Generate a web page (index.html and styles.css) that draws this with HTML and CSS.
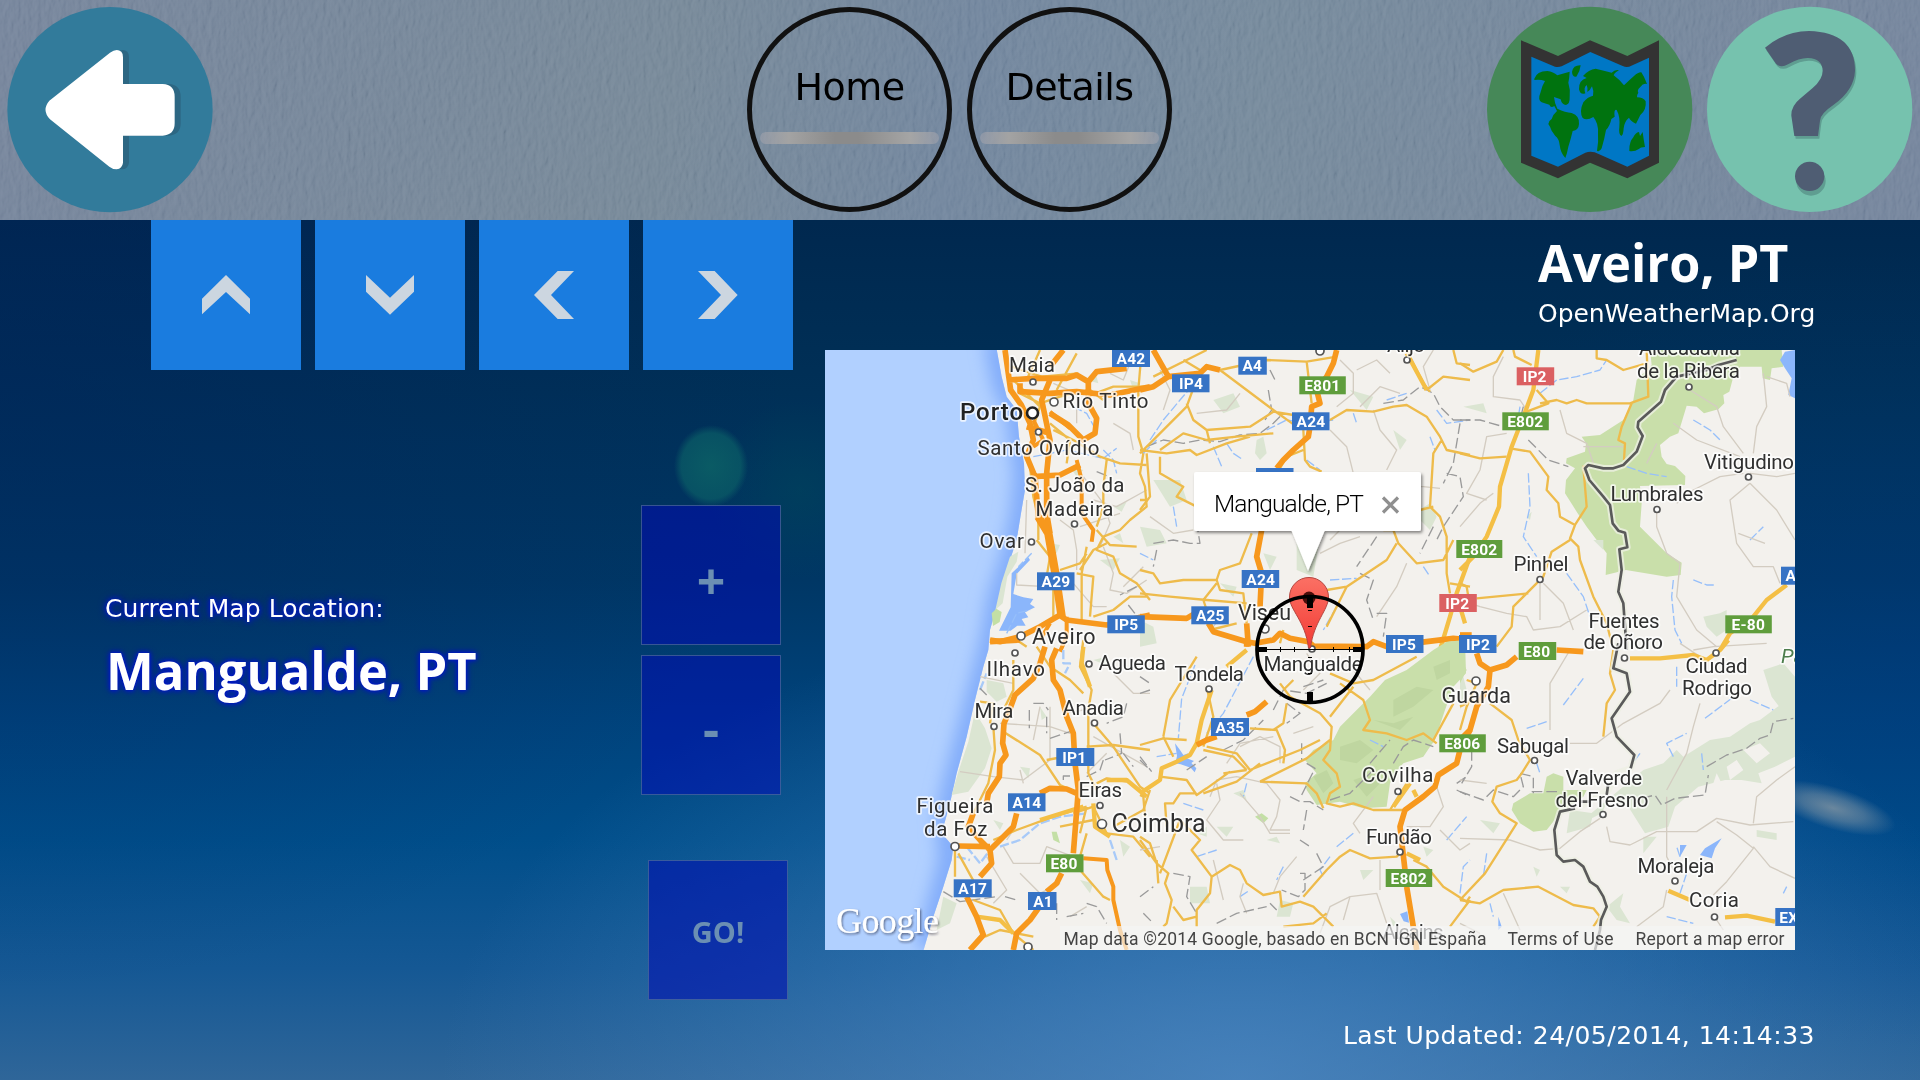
FILE: index.html
```html
<!DOCTYPE html>
<html lang="en">
<head>
<meta charset="utf-8">
<title>Weather map</title>
<link rel="stylesheet" href="styles.css">
</head>
<body>
<header class="topbar">
  <svg class="paper" width="1920" height="220" aria-hidden="true">
    <filter id="grain" x="0" y="0" width="100%" height="100%">
      <feTurbulence type="fractalNoise" baseFrequency=".2 .09" numOctaves="3" seed="4" result="n"/>
      <feDiffuseLighting in="n" surfaceScale="1.3" lighting-color="#fff"><feDistantLight azimuth="200" elevation="32"/></feDiffuseLighting>
    </filter>
    <rect width="1920" height="220" filter="url(#grain)"/>
  </svg>
  <nav class="side">
    <svg class="round" viewBox="0 0 660 660">
      <circle cx="330" cy="329" r="308" fill="#327b9b"/>
      <path transform="translate(18 0)" fill="#2d6783" d="M148 302L330 158Q350 143 364 155Q369 160 369 172V252H488Q524 254 524 290V370Q524 405 488 407H369V488Q367 505 350 508Q338 508 328 500L150 358Q124 330 148 302z"/>
      <path fill="#fff" d="M148 302L330 158Q350 143 364 155Q369 160 369 172V252H488Q524 254 524 290V370Q524 405 488 407H369V488Q367 505 350 508Q338 508 328 500L150 358Q124 330 148 302z"/>
    </svg>
  </nav>
  <nav class="tabs">
    <a class="tab"><span class="tab-name">Home</span><span class="tab-bar"></span></a>
    <a class="tab"><span class="tab-name">Details</span><span class="tab-bar"></span></a>
  </nav>
  <nav class="side side-right">
    <svg class="round" viewBox="60 0 660 660">
      <circle cx="389" cy="328" r="308" fill="#468858"/>
      <path fill="#333" d="M183 121L294 168L390 121L502 168L597 121V488L502 535L390 488L294 535L183 488z"/>
      <path fill="#0077c5" d="M214 170L285 200Q294 203 305 199L391 156L488 198Q502 204 514 197L567 173V467L502 500L404 457Q390 453 376 458L294 500L214 467z"/>
      <g fill="#00730f">
        <path d="M223 236Q230 214 262 213Q280 215 292 226L329 215Q328 235 325 248Q332 270 329 292Q330 312 318 315Q305 314 302 298L282 291Q284 312 292 326Q316 337 335 339Q360 348 357 372Q356 390 338 393Q333 415 325 440Q321 462 316 474Q302 460 299 435Q297 416 286 408L275 392Q272 382 265 372Q266 362 275 357Q280 342 291 333L283 318Q272 325 268 314L245 307Q232 300 242 276Q247 255 255 243Q240 237 223 240z"/>
        <path d="M336 215Q340 195 362 196Q360 215 349 230Q337 232 336 215z"/>
        <path d="M369 228Q386 208 407 206Q432 212 455 218Q465 208 477 211Q463 219 461 226Q480 240 492 256Q508 240 522 228Q535 216 544 217Q553 230 561 252Q550 248 541 261Q530 270 535 278Q530 285 531 292Q550 292 557 304Q560 330 541 345L528 371Q512 364 507 353Q493 364 491 385Q490 405 484 408Q475 402 478 382Q481 350 470 330Q461 326 464 350L454 357Q450 378 438 390Q433 418 425 445Q418 458 411 452Q416 425 414 400Q416 370 400 351Q380 363 368 354Q357 335 370 307Q382 291 399 287Q402 272 396 259Q390 272 382 276Q384 263 380 255Q370 262 376 280Q361 286 357 268Q356 240 380 234z"/>
        <path d="M508 449Q508 425 520 412Q526 398 537 396L540 408L548 396Q551 420 555 441Q541 441 538 446Q522 456 508 453z"/>
      </g>
    </svg>
    <svg class="round" viewBox="720 0 660 660">
      <circle cx="1049" cy="328" r="308" fill="#76c2ae"/>
      <g fill="#5f9d91" transform="translate(4 8)">
        <path d="M915 143Q975 93 1047 93Q1185 97 1185 212Q1183 270 1120 315Q1080 342 1080 362L1074 408H1003L994 347Q993 318 1020 296L1058 264Q1088 238 1088 212Q1087 176 1044 174Q1020 173 984 193Q962 205 948 191z"/>
        <circle cx="1049" cy="535" r="44"/>
      </g>
      <g fill="#4f5d73">
        <path d="M915 143Q975 93 1047 93Q1185 97 1185 212Q1183 270 1120 315Q1080 342 1080 362L1074 408H1003L994 347Q993 318 1020 296L1058 264Q1088 238 1088 212Q1087 176 1044 174Q1020 173 984 193Q962 205 948 191z"/>
        <circle cx="1049" cy="529" r="44"/>
      </g>
    </svg>
  </nav>
</header>

<main class="page">
  <section class="controls">
    <div class="pan">
      <button class="pan-btn"><svg viewBox="0 0 450 450"><path d="M153 283V236L225 165L297 236V283L225 216z"/></svg></button>
      <button class="pan-btn"><svg viewBox="0 0 450 450"><path d="M153 165V215L225 284L297 215V165L225 233z"/></svg></button>
      <button class="pan-btn"><svg viewBox="0 0 450 450"><path d="M285 153H236L165 225L236 297H285L216 225z"/></svg></button>
      <button class="pan-btn"><svg viewBox="0 0 450 450"><path d="M165 153H215L284 225L215 297H165L234 225z"/></svg></button>
    </div>
    <div class="lower">
      <div class="place">
        <p class="place-label">Current Map Location:</p>
        <h2 class="place-name"><span class="fit">Mangualde, PT</span></h2>
      </div>
      <div class="zoom">
        <button class="sq plus">+</button>
        <button class="sq minus">-</button>
        <button class="sq go">GO!</button>
      </div>
    </div>
  </section>

  <section class="view">
    <div class="heading">
      <h1 class="city"><span class="fit">Aveiro, PT</span></h1>
      <p class="source">OpenWeatherMap.Org</p>
    </div>
    <svg class="map" viewBox="0 0 970 600">
      <defs>
        <filter id="soft" x="-20%" y="-20%" width="140%" height="140%"><feGaussianBlur stdDeviation="24"/></filter>
        <filter id="drop" x="-20%" y="-20%" width="140%" height="160%"><feDropShadow dx="1.5" dy="2" stdDeviation="1.6" flood-opacity=".45"/></filter>
        <filter id="logodrop" x="-10%" y="-10%" width="120%" height="140%"><feDropShadow dx="1" dy="1.5" stdDeviation=".9" flood-color="#223" flood-opacity=".6"/></filter>
        <clipPath id="seaclip"><path d="M0 0H525L545 110L560 170L590 210L597 290L612 370L615 450L603 520L590 600L570 660L545 740L530 800L510 870L505 930L490 980L465 1080L440 1190L410 1300L390 1390L365 1480L400 1520L395 1560L370 1640L340 1730L308 1840H0z"/></clipPath>
        <linearGradient id="pin" x2="0" y2="1"><stop stop-color="#fb7064"/><stop offset="1" stop-color="#f23c35"/></linearGradient>
      </defs>
      <rect width="970" height="600" fill="#f3f1ed"/>

      <!-- west, north -->
      <g transform="translate(-5 -10) scale(.33333)">
        <g clip-path="url(#seaclip)">
          <rect width="700" height="1850" fill="#b1d0ff"/>
          <path fill="none" stroke="#83adfa" stroke-width="90" filter="url(#soft)" d="M535 0L560 130L600 210L610 290L625 400L615 520L590 640L545 780L525 900L500 1000L450 1190L410 1340L390 1440L400 1560L330 1830"/>
        </g>
        <g class="wood"><path d="M570 650l25-15-5 30-28 45-14 80-22 20 18-80z"/><path d="M750 380l40 10-20 20zM800 120l30-10 5 20zM880 500l40-15-15 30zM840 660l60-5-20 35zM930 120l30 10-20 20zM690 610l30 5-10 25zM880 590l20-10 10 30z"/></g>
        <path fill="#c3dfa5" d="M515 820l14-14 16 10-6 30-20 12z"/>
        <path class="lake" d="M575 700l50-48 5 8-40 42-10 60 30 10 30 5-10 15 15 10-30 15 10 15-20 5 12 20-25 0-20 15-35 0 15-30 20-40z"/>
        <path class="river" d="M635 640l-40 40M560 880l30-60 40-10M640 350l100-20 110 25 40-30M850 330l30 30 10 40M760 200l40 20 25 45"/>
        <path class="minor" d="M590 700l0 35 90 5M720 540l40 30 10 60 0 60M790 410l60 80 20 60-30 70M820 480l70 20 90-50M850 620l30 80-10 50 50 10 60-40M880 250l50 30 10 50M780 560l120-40M620 480l-5 160M760 730l60 70 40 0M870 100l40 20 20-50M910 740l60-60M700 130l70 30 0 90"/>
        <path class="rail" d="M925 795l50 65M830 395l30 12M950 740l-50 25"/>
        <path class="prim" d="M575 80l90 30 110-10M600 160l60 30 60-20 90-20 40 30M580 120l80 80-20 60M690 250l60 50-10 70M660 30l-40 90M770 40l-60 110M800 170l80-30 110 0M630 380l10 90 15 60 0 70M700 270l60 30 80 50 60 20 80 5M860 360l-10 80 0 60-20 60M965 30l-10 120 0 140 15 50-10 60 15 40 5 60-50 40-30 30-50 20-20 40 50 20 20 50 50 30 40 50M650 600l40 50-10 60M720 690l60-20 20-30M800 620l-15 80 0 140M700 740l0 90M770 700l50 10-10 120M820 830l60-20 50-40 50 0M860 610l-40 20-40 60M830 570l40 45 80 5"/>
        <path class="way" d="M555 30L572 150L604 195L630 250L640 300L620 350L645 410L655 530L685 580L706 700L725 830L740 840L860 855L990 825M565 120L640 115L740 115L770 105L805 125L830 95L920 85M600 130L600 155L690 160L770 155L870 165L990 140M690 120L665 180L690 300L680 400L680 520L690 580M690 220L745 255L790 300L825 280L830 235L805 190V120M620 260L690 280M640 410L720 405L780 375M730 30L690 80M510 900L540 905L600 890L660 860L720 825"/>
        <path class="way main-way" d="M655 530L685 580L706 700L725 830"/>
        <path class="thin-way" d="M690 215l60 50M640 240l30 60-30 20M740 830l0 60-20 45M690 850l-30 50M770 360L785 420L785 520L820 570L815 605"/>
      </g>

      <!-- centre, north -->
      <g transform="translate(315 -10) scale(.33333)">
        <g class="wood"><path d="M350 300l20-10 10 50-20 20-15-20zM220 180l60-20 20 40-50 20zM40 420l80 0 20 60-50 20zM470 590l70 0-20 120-50-20zM820 520l50-30 20 40-20 40zM0 560l60 10 20 40-60 10zM240 730l50 10-10 30zM0 840l40 20 10 50-50 10zM630 150l70 20-20 40zM760 270l40 30-20 30zM370 640l40 10-20 40z"/></g>
        <path class="river" d="M30 300l40-60 50-60 60-70M10 340l40-40M220 320l25 60M260 310l20 30 30 20M380 270l60-30 60 10 80-10M640 220l10 30M740 180l60-20M890 210l30 40 70-10M570 720l80-5M590 800l-40 70M100 500l10 60M850 680l20 30M500 360l40 30M0 640l40 20M870 290l15 40"/>
        <path class="minor" d="M60 90l30 60-20 60M170 220l90-10 40-50M600 60l40 40 0 60-50 40M650 90l60-30 40 40M700 210l20 60 50 60-30 60M570 270l50 50 20 80M570 600l60-60 60-40M880 30l-30 50 20 70M790 440l60 0 50 5M30 530l70 50 60-10M540 640l60-30 60-20M710 830l60-90 30-70M250 820l-30 40M660 200l60-60 60 20"/>
        <path class="rail" d="M20 320l50-20 60 10 50-10 60 5 60-20 60-5 40-30 30-30M390 90l15 30M385 150l10 60-20 30M730 190l60-10 50-40 40 20 20 40 40 40 50 0M960 250l-20 120-30 60M920 400l40 10 10 60-60 90-20 40M710 590l-60 90M880 560l-40 80M660 700l40 20-20 60 20 60M710 820l30 0-10 70M40 610l60-10 50 10 30 0-10-60M50 630l-10 50"/>
        <path class="prim" d="M240 90L380 60L500 65L590 50M500 65L515 190M180 90L140 200L30 310L0 340M140 190L160 240L200 270L330 260L400 215L460 225M240 90L320 150L400 210L470 260M200 270L210 310M60 330L130 280L200 300L290 290L400 280M0 330L80 340L150 330L170 345L260 310L330 290M20 340L30 470L0 510M570 240L620 210L700 215L760 200L800 195L860 230L900 290L920 330L990 345M905 300L880 340L870 500L900 530L920 590L920 700L930 760M490 270L495 360L510 380L545 395M490 330L440 350L400 420M730 570L760 570L775 610L830 670L910 660L940 600M770 610L740 660L620 740L560 750M620 740L560 860M0 690L40 700L60 730L130 720L230 720L240 690L300 670L335 580M230 720L240 750L310 760L320 850M0 760L90 770L200 780L320 790M230 730L190 780L220 870M60 350L60 400L130 440L110 470L170 500M840 510L880 500M930 730L990 740M800 30L850 130L870 155M860 150L910 110L990 120M940 30L950 70L990 75M0 480L15 480M130 60L180 90M40 110L140 60L200 30M210 870L290 850M430 870L420 910"/>
        <path class="wide" d="M990 650L950 760L930 830L900 930M860 150L800 40"/>
        <path class="way" d="M40 30L85 110L40 140L0 150M85 110L180 100L200 80L240 90M590 30L580 70L560 110L530 150L540 190L515 200L510 260L505 290L460 330L430 360L410 385M365 570L350 650L365 700L360 800M0 830L140 835L165 820M205 850L220 875L320 905L345 910L400 900L420 880L450 895L505 905L520 918L680 920L700 905L740 920L860 905L940 895L990 900M320 850L325 920"/>
      </g>

      <!-- east, north -->
      <g transform="translate(635 -10) scale(.33333)">
        <path class="park" d="M570 30L965 30L970 80L935 85L930 120L908 115L905 80L840 80L820 110L808 155L790 165L793 190L775 208L732 220L710 200L680 197L655 280L630 290L600 315L605 350L620 372L645 378L676 408L675 435L540 438L545 490L540 560L580 600L620 640L665 668L662 705L620 710L498 690L437 705L440 640L410 600L380 560L350 515L315 460L318 420L345 385L318 370L320 355L375 335L378 310L365 290L420 285L490 240L520 180L530 120L575 75z"/>
        <path class="lake" d="M960 60l15-25 30-5v145l-20-10 10-50-20-30z"/>
        <g class="wood"><path d="M730 830l50-10 20-10 0 60-30 20-30-30zM400 600l30 0 0 30zM200 530l15-15-5 25zM10 200l60-10 10 30z"/></g>
        <path class="river" d="M240 160l50-40 60-10 70-20 20-30M500 380l60 20 60 10M205 400l5 100-20 90 40 60M320 700l50 70 20 60M640 720l-5 50 10 100 20 40M700 720l40 15 25 0M180 200l-10 60M700 240l50 30 30 30M870 600l40-40"/>
        <path class="minor" d="M130 50l-30 60 0 60 80 10 20 30M300 210l20 70 60 30 20 60M370 320l120 0M590 310l-30 60M640 250l70 50 130 50M690 150l80 50 20 60 60 80M850 400l-70 10-80 40-50 40M870 400l80 10 55-10M880 340l10-80 30-60-10-100M920 110l60 20 10 40M870 430l-60 50 20 130 50 70 60 0 20 50M870 430l80 80 55 90M590 500l0 60 30 80 40 30-10 100 60 100 60 50M835 580l80 30M80 480l-60-20 40-70 20-100 60-10M100 460l-40 30-60 70M240 720l0 120M250 730l60 60 30 80M0 780l60 20 80 20 60 10 20 40 80-10 80-50"/>
        <path class="rail" d="M0 240l60 0 70 20M205 300l60 60 60 20M190 200l-10 40"/>
        <path class="prim" d="M0 70L40 95L110 65L130 30M160 30L165 50L215 75M410 30L410 55L440 60L490 90L560 70M230 150L265 190L200 215M240 190L290 180L320 190L350 180L380 190L510 190L565 170L560 30M515 190L485 260L475 300L495 310L492 360M0 340L60 355L140 350M150 325L210 335L265 410L260 450L295 490L300 530L345 555L380 500L370 380L400 375M345 555L330 595L355 620L360 660L400 770L440 850L455 910M330 600L275 635L250 710L160 800L155 860L110 920M50 775L205 760M0 730L20 740L25 770"/>
        <path class="wide" d="M235 30L220 150L190 230L155 320L120 440L117 500L80 590L40 650L0 690M980 735L920 780L880 830L810 880L780 930M0 800L15 850"/>
        <path class="way" d="M0 885L35 885"/>
        <path class="border-glow" d="M830 60L775 75L740 90L650 110L615 150L603 185L535 245L533 262L548 288L530 335L490 375L460 385L430 385L385 375L375 385L388 420L430 470L450 495L458 550L475 572L495 578L502 622L478 628L485 690L475 755L490 790L500 930"/>
        <path class="border" d="M830 60L775 75L740 90L650 110L615 150L603 185L535 245L533 262L548 288L530 335L490 375L460 385L430 385L385 375L375 385L388 420L430 470L450 495L458 550L475 572L495 578L502 622L478 628L485 690L475 755L490 790L500 930"/>
      </g>

      <!-- west, south -->
      <g transform="translate(-5 290) scale(.33333)">
        <g class="wood"><path d="M500 120l50 10 10 40-30 15-30-30zM465 215l30 50 20 60-20 60-50 70-50 10 20-70 30-90zM600 380l30 5-5 30zM370 770l40 20-20 60-40 20zM660 200l20 30-15 10zM820 60l40-10 10 30zM840 200l20-15 10 30zM520 540l30 10-10 20zM780 720l40 10-10 30zM900 600l30 20-20 30z"/></g>
        <path fill="#c3dfa5" d="M695 575l15 0 10 35-20-10z"/>
        <path class="river wide-river" d="M540 620l60-20 60-50 60-20 80-10M730 30l0 40 20 0-15 30M410 650l40 10M440 620l40 50 30-40M870 600l20 60M480 150l20-50"/>
        <path class="minor" d="M480 110l100 20M540 250l150 10 60 20M420 395l100 15 90 10 80-60 0-160M660 200l-20 100M610 430l-10-40M550 620l30 50 80 0 20-50 80 30M600 700l60 60 60-30M500 650l60 100-40 40M730 220l60-10M860 340l-60 60M820 290l160 90M880 100l60 60 50 0M560 600l20-30M800 800l-50 30M540 840l60 60"/>
        <path class="rail" d="M480 145l20 20M628 210v55M640 190l30 0 15 20M680 230v50M690 295l60-20M730 420v-12h35M800 410l40-20 10-30M900 280l5 60-50 20M920 190l-10 40-50 20M370 755l50 30 110-15M555 770l35 10M910 340l30 40M960 360l30 30M800 790l30 10 30 50M710 790v50M740 830l50-10"/>
        <path class="prim" d="M580 60L580 150L555 200M520 260L525 330L505 430L470 500L440 560M550 275L660 345L720 435L765 455M680 360L760 345M800 320L880 315L990 330M820 250L880 320L960 440L990 460M790 0L780 80L815 150L805 210L805 400L830 450M650 20L690 80L750 120L790 160M480 185L520 190L510 250M405 620L405 710M415 640L470 740M460 780L540 810L580 880L640 930M495 890L540 870L640 890M520 600L590 570L700 530L800 500M780 580L800 500M800 580L780 650M780 690L850 770L870 780M760 520L820 500L860 580L940 590L990 650M990 450L970 510L880 560M720 560L820 540M830 430L860 415L920 425M620 20L590 0"/>
        <path class="wide" d="M790 20L785 70L810 140M860 420L920 420L980 470M820 490L825 560L870 590M470 830L540 840L580 880M660 540L790 500"/>
        <path class="way" d="M510 5L600 0M675 20L660 70L640 115L585 165L565 220L552 250L548 310L558 345L540 370L538 410L505 460L500 490M460 520L445 560L480 600L510 630L515 670L480 710M415 618L510 620M480 600L510 630L580 560L590 520M660 460L690 445L740 447L770 460M710 25L695 60L700 120L720 150L740 230L760 280L765 370L775 450L760 640M725 700L710 730L680 755M655 805L630 840L590 880L580 930M440 770L470 830L490 885L450 930"/>
        <path class="thin-way" d="M790 655L860 660L862 690L880 740L880 780L900 870L920 930"/>
      </g>

      <!-- centre, south -->
      <g transform="translate(315 290) scale(.33333)">
        <path class="park" d="M735 120L800 90L880 30L920 5L975 0L978 100L940 140L915 210L885 300L870 320L850 350L790 370L765 400L750 430L740 500L670 505L600 485L530 495L500 450L495 430L530 400L495 360L520 330L580 300L600 260L650 210L690 170z"/>
        <g fill="#bfd6a0"><path d="M760 180l70-40 50 10-60 50-60 30zM600 320l60-20 40 30-50 40-50-10zM520 410l40-20 20 40-30 30zM640 420l60-20 30 20-50 50zM880 80l50-20 0 40-40 20zM700 240l60 10 60-20-40 40z"/></g>
        <g class="wood"><path d="M750 830l20 20-10 10zM150 740l50 0 10 50-60 0zM280 460l30-10 10 30zM170 580l30-20 0 30zM420 780l40 10-10 40-40 0zM380 600l30-10 10 20zM230 560l50 0-20 30zM660 690l40 0-30 30zM850 620l30 10-20 20z"/></g>
        <path fill="#c3dfa5" d="M345 530l20-10 20 15-15 15z"/>
        <path class="lake" d="M105 310l15 20 10 15 15-5-5 15 22 8-8 6 15 16-5 12-12-14-30-10-16-3 5-22zM780 822l22-8 5 34-16-4z"/>
        <path class="river" d="M165 75l-40 100-10 120M50 350l60-10M340 50l-90 170-50 60M130 490l60 20M320 430l-10 40M570 650l-30 40 10 20M430 680l-20 40M590 620l50-40M960 760l10-80 20-20M170 650l60-20M690 300l40 20M300 770l30-20M920 600l60-70"/>
        <path class="minor" d="M210 470l20-50 60-10 90 20 40 50-10 50-20 40 60 0M230 430l10 50-40 60 50 60 60 0M300 460l60 70 30 50 60 0M0 630l60-10M300 320l60-30 60 30 0 50M260 370l40-60 100-20M720 750l0-90M610 840l20-70 80-10 30 90M700 470l-60 80 20 30M800 560l70 0 40-60-20-60M640 90l50 60M500 40l40 60-50 50M460 280l60-20M540 880l30-80 60-30M900 570l60 60 30-20M400 760l20-50 50-60M320 820l-20-50 10-40M220 660l30 120"/>
        <path class="rail" d="M0 350l35 45M140 390l60-40M250 330l60-30 60-60M400 210l30-60 70 10 60-30M440 190l40 30-40 30M490 140l60-20M485 310l0 50M500 370l25 15-20 40-20 40M450 470l30 15 30 0 40 25M500 510l-10 60M480 600l30 20M530 640l20 40-60 40M480 700l15 0 0 50-20 20-50-20M570 480l60-20 80-80M760 370l30-50 30-20 60 20M690 370l60-70M100 700l50 10-10 60 30 50M230 850l60-30 90-20M390 790l20 20M0 770l40-30M950 430l30-20M950 450l40 20M10 820l30 30M0 160l30-10M0 110l30 20"/>
        <path class="prim" d="M170 50L90 180L70 290M0 315L70 295L140 300M200 140L220 230L190 320M70 290L100 350M60 410L140 420L170 465L200 445L270 395M190 460L290 425L360 370M200 320L290 340L330 390L480 330L540 300M320 390L250 400M190 330L280 350L320 390M360 425L500 355L570 300M360 425L500 430L530 460L550 505M330 265L410 270L435 330L430 370M440 190L430 250L400 270M420 130L450 170L540 220L575 260L570 330L550 360L590 400L600 440L570 460L560 490L600 500L640 490L700 510L790 510M570 100L640 130L700 120L830 50M640 140L570 230M600 130L670 180L690 240L670 270L740 280L800 300L850 280L890 310M880 300L940 190M0 590L30 610L50 670L85 700L75 730L95 780L80 850L70 860M50 660L55 730M60 700L120 540L180 600L155 630L215 710L210 760L170 810L170 860M0 600L50 670M215 710L270 675L300 690L320 730L370 765L420 755L425 800L480 785L520 800L550 830L580 860M490 770L560 690L600 650L630 630L690 655L770 650L780 640M820 660L860 680L910 740L980 785L990 770M990 780L930 860M170 460L120 460L100 490L75 490L80 560M800 430L750 510M0 465L10 470L15 530M560 820L520 850L430 860M100 800L130 840L170 830M430 150L460 120"/>
        <path class="wide" d="M0 460L60 420L65 385L110 365L150 345L170 310L185 240L215 150M260 80L320 30M760 500L810 430M820 450L830 470M840 660L800 640"/>
        <path class="way" d="M380 185L345 215L320 225M230 290L200 300L170 315M320 0L320 20M990 270L960 330L950 370L895 405L885 440L850 470L795 510L780 560L795 690M800 740L820 860L830 930"/>
      </g>

      <!-- east, south -->
      <g transform="translate(635 290) scale(.33333)">
        <g class="wood"><path d="M550 390l60-20 40-40 20 20 80-50 60-10 60-40 30-10 80-60 25 20v150l-60 30-50 20 10 30-60-10-50 0-80 20-70 60-20 60-70 20-50-80-60-20-20 40-80 40zM910 90l60-20 35 40v100l-40 0-30-40zM330 510l70 10-10 40-70 20zM890 570l60 10 0 20-60-10zM300 740l30 0-10 20zM440 800l50-40-10 40 30 50-40-10zM0 70l20 80-20 60zM550 590l40 0-40 50zM60 540l60 10-20 30zM220 680l20 10-10 20z"/></g>
        <path class="park" d="M160 490L210 460L250 460L260 410L280 400L310 410L310 450L380 450L370 470L300 520L260 570L220 575L180 550L155 510zM0 50L20 90L0 130z"/>
        <path fill="#f3f1ed" d="M800 380l30-20 20 30-40 30zM850 330l50-20 30 30-40 30zM770 400l20 40-30-10z"/>
        <path class="lake" d="M735 625l50-30-20 30-10 30-35-10zM660 615l20 0-20 35zM115 830l10 30-10 10z"/>
        <path class="river" d="M735 235l80-60M310 195l60-80M200 265l60-20M640 350l-20-40 60-30M725 340l5 50M650 80l0 60M870 180l70 30M80 640l-10 70M90 790l10 40M970 760l10-20M680 700l-20 60M660 650l-10-30M540 340l-30 40M620 830l80 20M230 370l10 30"/>
        <path class="minor" d="M270 270l0-140 60-100M330 310l80 0 80-60 110-60 30-40M720 190l-20 70-20 80-60 110M620 470l0 180 20 40M0 595l150 5 90 30 60-5 60-50 60-40M440 560l10 45 60 10 80-40 120 0 60-40 100 20 130-10M770 545l60 40 50 40-80 100-40 40M880 620l50 60 75 35M880 550l10-80 60-50 55-40M620 750l-10 50-80 60M770 840l20 30M130 760l50 110M660 10l60 40M700 30l60-10 160-10M0 850l60 30M0 420l80 10"/>
        <path class="rail" d="M0 455l70 25 30-30 60 20 30-30-10-40 40 10 0 50M215 455l80 0M545 475l40-10 20 30 40-20 90-10 10-60M740 380l60-35 60-20 40-30 30-10 10-40 60-10M35 330l0 50-30 50"/>
        <path class="prim" d="M90 190L155 240L175 300L210 360L185 400L170 420L110 440L97 485L120 520L170 550L145 590L75 700L0 780M0 780L60 790L130 750L235 740L340 795L400 805L420 830L400 860M460 30L450 100L465 150L440 190L430 290M20 120L50 130L20 200L0 270M0 200L40 180"/>
        <path class="wide" d="M510 55L600 55L700 45L740 60L780 30L805 0M625 752L690 780M795 832L860 827L945 845"/>
        <path class="way" d="M50 40L60 70L90 90L140 75L170 50M90 90L85 140L50 200L30 270L0 300M290 30L370 35"/>
        <path class="border-glow" d="M475 10L460 85L500 100L510 155L455 235L470 290L523 345L512 385L470 400L445 450L360 500L300 515L283 570L290 645L310 665L345 660L370 680L390 725L412 740L430 770L440 800L423 840L420 870L405 930"/>
        <path class="border" d="M475 10L460 85L500 100L510 155L455 235L470 290L523 345L512 385M445 430L440 465M390 485H360M345 505L300 515L283 570L290 645L310 665L345 660L370 680L390 725L412 740L430 770L440 800L423 840L420 870L405 930"/>
      </g>

      <g class="dot">
        <circle cx="208" cy="32" r="3"/><circle cx="229" cy="52" r="4"/><circle cx="213.500" cy="82" r="3"/><circle cx="249.500" cy="174" r="3"/><circle cx="206.500" cy="192" r="3"/><circle cx="196" cy="286" r="4"/>
        <circle cx="495" cy="1" r="4"/><circle cx="582" cy="10" r="3"/><circle cx="440" cy="279" r="4"/><circle cx="487" cy="299" r="3"/>
        <circle cx="864" cy="37" r="3"/><circle cx="923.500" cy="127" r="3"/><circle cx="832" cy="159.500" r="3"/><circle cx="715" cy="229.500" r="3"/>
        <circle cx="190" cy="303" r="3"/><circle cx="264" cy="314" r="3"/><circle cx="169" cy="376.500" r="3"/><circle cx="269.500" cy="373" r="3"/><circle cx="275" cy="455.500" r="3"/><circle cx="277" cy="474" r="4.500"/><circle cx="130" cy="496.500" r="4"/><circle cx="203" cy="597" r="4"/>
        <circle cx="384" cy="339" r="3"/><circle cx="573" cy="441.500" r="3"/><circle cx="575" cy="502" r="3"/>
        <circle cx="799.500" cy="308" r="3"/><circle cx="891" cy="303" r="3"/><circle cx="651" cy="331" r="4"/><circle cx="709.500" cy="410.500" r="3"/><circle cx="778" cy="464.500" r="3"/><circle cx="850" cy="531" r="3"/><circle cx="889.500" cy="567" r="3"/>
        <circle class="capital" cx="207.500" cy="63" r="5.500"/>
      </g>

      <g class="town" transform="translate(0 -.7)">
        <text x="184" y="23" textLength="46">Maia</text>
        <text x="135" y="70.500" textLength="63" class="big bold">Porto</text>
        <text x="237.500" y="58.700" textLength="86">Rio Tinto</text>
        <text x="152.500" y="105.500" textLength="122">Santo Ovídio</text>
        <text x="200" y="143" textLength="99.500">S. João da</text>
        <text x="210.500" y="166.500" textLength="78">Madeira</text>
        <text x="154.500" y="198.500" textLength="44.500">Ovar</text>
        <text x="207" y="294.500" textLength="63.500" class="mid">Aveiro</text>
        <text x="562" y="2.500" textLength="38">Alijo</text>
        <text x="413" y="270.500" textLength="53" class="mid">Viseu</text>
        <text x="814" y="6" textLength="101">Aldeadávila</text>
        <text x="812" y="29" textLength="103">de la Ribera</text>
        <text x="879" y="119.300" textLength="90">Vitigudino</text>
        <text x="785.500" y="151.300" textLength="93">Lumbrales</text>
        <text x="688.500" y="221.500" textLength="55">Pinhel</text>
        <text x="763.500" y="279" textLength="71">Fuentes</text>
        <text x="758.500" y="300" textLength="79.500">de Oñoro</text>
        <text x="161.500" y="326.500" textLength="58.500">Ilhavo</text>
        <text x="273.500" y="321" textLength="67.500">Agueda</text>
        <text x="149.500" y="369" textLength="39">Mira</text>
        <text x="237.500" y="365.500" textLength="61.500">Anadia</text>
        <text x="253.500" y="448" textLength="43.500">Eiras</text>
        <text x="91.500" y="463.300" textLength="77">Figueira</text>
        <text x="99" y="486.500" textLength="63.500">da Foz</text>
        <text x="286.500" y="483" textLength="94" class="big">Coimbra</text>
        <text x="349.500" y="332" textLength="69.500">Tondela</text>
        <text x="438.500" y="321.500" textLength="99">Mangualde</text>
        <text x="616.500" y="354" textLength="69.500" class="mid">Guarda</text>
        <text x="537" y="433" textLength="71.500">Covilha</text>
        <text x="541" y="494.700" textLength="66">Fundão</text>
        <text x="557.500" y="590" textLength="61">Alcains</text>
        <text x="860.500" y="324" textLength="62">Ciudad</text>
        <text x="857" y="345.700" textLength="70">Rodrigo</text>
        <text x="672" y="403.300" textLength="72">Sabugal</text>
        <text x="740.500" y="435.500" textLength="76.500">Valverde</text>
        <text x="730.500" y="457.300" textLength="93">del Fresno</text>
        <text x="812.500" y="524" textLength="77">Moraleja</text>
        <text x="864" y="558" textLength="50">Coria</text>
        <text x="956" y="314" class="green">Parque</text>
      </g>

      <g class="shield">
        <g transform="translate(287 -1)"><rect width="38"/><text x="19">A42</text></g>
        <g transform="translate(212 222.300)"><rect width="37.500"/><text x="19">A29</text></g>
        <g transform="translate(282.300 265.300)"><rect width="37.500"/><text x="19">IP5</text></g>
        <g transform="translate(413.300 6.700)"><rect width="28.500"/><text x="14">A4</text></g>
        <g transform="translate(347 24.300)"><rect width="37.500"/><text x="19">IP4</text></g>
        <g transform="translate(467 62.300)"><rect width="37.500"/><text x="19">A24</text></g>
        <g transform="translate(431 118)"><rect width="37.500"/><text x="19">IP3</text></g>
        <g transform="translate(416.700 220)"><rect width="37.500"/><text x="19">A24</text></g>
        <g transform="translate(366.300 256.300)"><rect width="37.500"/><text x="19">A25</text></g>
        <g transform="translate(561 285)"><rect width="37.500"/><text x="18">IP5</text></g>
        <g transform="translate(634 285)"><rect width="37.500"/><text x="19">IP2</text></g>
        <g transform="translate(956 216.700)"><rect width="37.500"/><text x="19">A62</text></g>
        <g transform="translate(231.300 398)"><rect width="38"/><text x="18">IP1</text></g>
        <g transform="translate(183 443.300)"><rect width="37.500"/><text x="19">A14</text></g>
        <g transform="translate(128.700 529.300)"><rect width="38"/><text x="19">A17</text></g>
        <g transform="translate(203 542)"><rect width="28.500"/><text x="15">A1</text></g>
        <g transform="translate(386 368)"><rect width="38"/><text x="19">A35</text></g>
        <g transform="translate(950.300 558)"><rect width="46"/><text x="26">EX-A1</text></g>
        <g class="euro">
          <g transform="translate(474.300 26.300)"><rect width="46.500"/><text x="23">E801</text></g>
          <g transform="translate(677.300 62.300)"><rect width="46.500"/><text x="23">E802</text></g>
          <g transform="translate(631.300 190)"><rect width="46"/><text x="23">E802</text></g>
          <g transform="translate(693.700 292)"><rect width="37.500"/><text x="18">E80</text></g>
          <g transform="translate(900.300 265.300)"><rect width="46.500"/><text x="23">E-80</text></g>
          <g transform="translate(221 504.300)"><rect width="37.500"/><text x="18">E80</text></g>
          <g transform="translate(614.300 384.300)"><rect width="46.500"/><text x="23">E806</text></g>
          <g transform="translate(560.700 519)"><rect width="46.500"/><text x="23">E802</text></g>
        </g>
        <g class="red">
          <g transform="translate(691.700 17.300)"><rect width="37.500"/><text x="18">IP2</text></g>
          <g transform="translate(614.300 244)"><rect width="37.500"/><text x="18">IP2</text></g>
        </g>
      </g>

      <path fill="url(#pin)" stroke="#b5453f" d="M464.500 247a19.500 19.500 0 0 1 39 0c0 13-15 25-18 51h-2c-3-27-19-38-19-51z"/>
      <circle cx="484" cy="248" r="6.500" fill="#4a0d0a"/>

      <g fill="none" stroke="#000">
        <circle cx="485" cy="299.500" r="53" stroke-width="3.700"/>
        <path stroke-width="6" d="M485 247v11M485 342v11"/>
        <path stroke-width="5" d="M433 299.500h9M528 299.500h9"/>
        <path d="M440 299.500h90M455.500 297v5M469.500 297v5M508.500 297v5M524.500 297v5M483 260.500h4M483 276.500h4M483 307.500h4M483 323.500h4"/>
      </g>

      <path filter="url(#drop)" fill="#fff" d="M371 122h223q2 0 2 2v55q0 2-2 2h-94.500L483 221L466.700 181H371q-2 0-2-2v-55q0-2 2-2z"/>
      <text class="bubble" x="389" y="162" textLength="150">Mangualde, PT</text>
      <path stroke="#8f8f8f" stroke-width="3.200" d="M558 147.500l15 15M573 147.500l-15 15"/>

      <text class="logo" x="11" y="582.500" textLength="103" filter="url(#logodrop)">Google</text>

      <rect x="235" y="576" width="735" height="24" fill="#f5f5f5" opacity=".68"/>
      <g class="legal">
        <text x="238.500" y="595" textLength="423">Map data ©2014 Google, basado en BCN IGN España</text>
        <text x="682.500" y="595" textLength="106">Terms of Use</text>
        <text x="810.500" y="595" textLength="149">Report a map error</text>
      </g>
    </svg>
    <p class="updated">Last Updated: 24/05/2014, 14:14:33</p>
  </section>
</main>
</body>
</html>
```
FILE: styles.css
```css
* { box-sizing: border-box; }
body {
  margin: 0;
  width: 1920px;
  height: 1080px;
  overflow: hidden;
  font-family: "DejaVu Sans", Verdana, sans-serif;
  color: #fff;
}
p, h1, h2 { margin: 0; }
button { padding: 0; margin: 0; border: 0; font: inherit; }

.topbar {
  position: relative;
  display: grid;
  grid-template-columns: 1fr auto 1fr;
  height: 220px;
  background: linear-gradient(100deg, #74839a, #758797 35%, #70849c 50%, #74889a 65%, #73839b);
}
.paper { position: absolute; inset: 0; opacity: .22; mix-blend-mode: soft-light; }
.side, .tabs { position: relative; display: flex; }
.side-right { justify-content: flex-end; }
.round { width: 220px; height: 220px; display: block; }
.tab {
  width: 205px;
  height: 205px;
  margin: 7px 8px 8px 7px;
  border: 5px solid #111;
  border-radius: 50%;
  display: flex;
  flex-direction: column;
  align-items: center;
  color: #000;
}
.tab-name { margin-top: 50px; height: 50px; line-height: 50px; font-size: 38px; letter-spacing: -.5px; }
.tab-bar {
  width: 179px;
  height: 12px;
  margin-top: 20px;
  border-radius: 6px;
  background: linear-gradient(90deg, rgba(165,165,175,.5), #a3a3a3 16%, #8b8b8b 42%, #8b8b8b 55%, #a5a5a5 84%, rgba(165,165,175,.5));
}

.page {
  position: relative;
  display: grid;
  grid-template-columns: 825px 1fr;
  height: 860px;
  background:
    radial-gradient(ellipse 800px 480px at 1240px 860px, rgba(80,140,200,.72), transparent 100%),
    radial-gradient(ellipse 37px 41px at 711px 246px, rgba(12,98,102,.85), rgba(10,92,102,.75) 80%, transparent 100%),
    radial-gradient(circle 90px at 800px 270px, rgba(0,80,90,.35), transparent),
    radial-gradient(ellipse 800px 600px at 0 20%, rgba(0,30,95,.35), transparent),
    radial-gradient(ellipse 600px 400px at 1920px 50%, rgba(0,55,130,.35), transparent),
    linear-gradient(#00284f 0, #003057 20%, #003765 42%, #00437c 58%, #004e8a 72%, #155894 87%, #2f6699 100%);
}
.page::after {
  content: "";
  position: absolute;
  left: 1768px;
  top: 567px;
  width: 130px;
  height: 42px;
  border-radius: 50%;
  background: radial-gradient(closest-side, rgba(140,155,165,.75), rgba(130,150,165,.5) 50%, transparent);
  transform: rotate(17deg);
}
.controls { display: flex; flex-direction: column; }
.pan { display: flex; gap: 14px; padding-left: 151px; }
.pan-btn { width: 150px; height: 150px; background: #1a7cdf; }
.pan-btn svg { display: block; width: 150px; height: 150px; fill: #ccd6e0; }
.lower { display: flex; justify-content: space-between; padding: 135px 44px 0 105px; }
.place { padding-top: 84px; text-shadow: 0 0 4px #0018c0, 0 0 5px #0018c0, 0 0 8px #0018c0; }
.place-label { font-size: 25px; line-height: 40px; letter-spacing: .1px; }
.place-name, .city { font: 700 52px/60px "Open Sans", sans-serif; white-space: nowrap; }
.place-name { margin-top: 11px; padding-left: 1px; }
.fit { display: inline-block; transform: scaleX(.975); transform-origin: 0 50%; }
.city .fit { transform: scaleX(.967); }
.zoom { position: relative; z-index: 1; display: flex; flex-direction: column; gap: 10px; }
.sq {
  width: 140px;
  height: 140px;
  border: 1px solid rgba(110,140,150,.5);
  background: rgba(0,5,185,.5);
  color: #6b8fb3;
  font: 700 29px/1 "Open Sans", sans-serif;
}
.plus { font-size: 50px; padding-top: 11px; }
.minus { font-size: 50px; padding-top: 6px; }
.go { margin: 55px -7px 0 7px; padding-top: 2px; background: rgba(0,15,175,.6); }

.view { position: relative; z-index: 1; width: 970px; display: flex; flex-direction: column; }
.heading { height: 130px; padding: 12px 0 0 713px; white-space: nowrap; }
.source { font-size: 25px; line-height: 44px; letter-spacing: -.05px; }
.map { display: block; width: 970px; height: 600px; }
.updated { margin: 66px -20px 0 0; text-align: right; font-size: 25px; line-height: 40px; letter-spacing: .5px; white-space: nowrap; }

.map path { stroke-linejoin: round; }
.way, .thin-way, .prim, .wide, .minor, .rail, .river, .border, .border-glow { fill: none; }
.way { stroke: #f7981d; stroke-width: 17; }
.main-way { stroke-width: 25; }
.thin-way { stroke: #f7981d; stroke-width: 12; }
.prim { stroke: #eebb4b; stroke-width: 7; }
.wide { stroke: #f4bf45; stroke-width: 13; }
.minor { stroke: #d3ccc1; stroke-width: 4; }
.rail { stroke: #9a9a9a; stroke-width: 4; stroke-dasharray: 32 12; }
.river { stroke: #96bffa; stroke-width: 4; stroke-dasharray: 28 8; }
.wide-river { stroke-width: 7; stroke: #a8caf8; }
.lake { fill: #8bb6fb; }
.wood { fill: #dbe5d2; }
.park { fill: #c9dfaa; }
.border { stroke: #5a5a5a; stroke-width: 8; }
.border-glow { stroke: #eef0e4; stroke-width: 20; opacity: .8; }
.dot circle { fill: #fff; stroke: #555; stroke-width: 1.7; }
.dot .capital { stroke: #222; stroke-width: 2.600; }
.town text {
  font: 20.500px Roboto, sans-serif;
  fill: #303030;
  stroke: rgba(255,255,255,.75);
  stroke-width: 3.5px;
  stroke-linejoin: round;
  paint-order: stroke;
}
.town .mid { font-size: 21.500px; }
.town .big { font-size: 25px; }
.town .bold { font-weight: 500; fill: #222; font-size: 24px; }
.town .green { fill: #4d7d4d; font-style: italic; }
.shield rect { height: 18px; fill: #3673c5; }
.shield text { font: 700 15.500px Roboto, sans-serif; fill: #fff; text-anchor: middle; transform: translateY(14.500px); letter-spacing: .2px; }
.euro rect { fill: #5f9d3c; }
.red rect { fill: #db6062; }
.bubble { font: 300 24.500px Roboto, sans-serif; fill: #000; }
.logo { font: 36px "Liberation Serif", serif; fill: #fff; }
.legal text { font: 17.500px Roboto, sans-serif; fill: #444; }
```
